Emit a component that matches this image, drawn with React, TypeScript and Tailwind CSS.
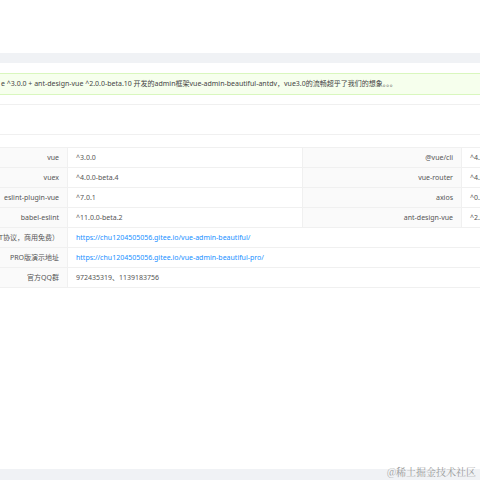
const font = { fontFamily: '"Noto Sans", "Noto Sans CJK SC", sans-serif' };

type Pair = { label: string; value: string };

const deps: [Pair, Pair][] = [
  [{ label: "vue", value: "^3.0.0" }, { label: "@vue/cli", value: "^4.5.6" }],
  [{ label: "vuex", value: "^4.0.0-beta.4" }, { label: "vue-router", value: "^4.0.0-beta.11" }],
  [{ label: "eslint-plugin-vue", value: "^7.0.1" }, { label: "axios", value: "^0.20.0" }],
  [{ label: "babel-eslint", value: "^11.0.0-beta.2" }, { label: "ant-design-vue", value: "^2.0.0-beta.10" }],
];

const wide: { label: string; value: string; link?: boolean }[] = [
  { label: "开源地址（MIT协议，商用免费）", value: "https://chu1204505056.gitee.io/vue-admin-beautiful/", link: true },
  { label: "PRO版演示地址", value: "https://chu1204505056.gitee.io/vue-admin-beautiful-pro/", link: true },
  { label: "官方QQ群", value: "972435319、1139183756" },
];

function Label({ text, border }: { text: string; border?: boolean }) {
  return (
    <div
      className={`flex h-[19px] items-center justify-end overflow-hidden whitespace-nowrap bg-[#fafafa] pr-2 pt-[2px] text-[#555] ${
        border ? "border-l border-[#f0f0f0]" : ""
      }`}
    >
      <span className="shrink-0">{text}</span>
    </div>
  );
}

function Value({ text, link }: { text: string; link?: boolean }) {
  return (
    <div
      className={`flex h-[19px] items-center overflow-hidden whitespace-nowrap border-l border-[#f0f0f0] pl-2 pt-[2px] ${
        link ? "text-[#1890ff]" : "text-[#555]"
      }`}
    >
      {text}
    </div>
  );
}

export default function App() {
  return (
    <div className="relative h-[480px] w-[480px] overflow-hidden bg-white text-[7px]" style={font}>
      <div className="h-[53px]" />
      <div className="h-[10px] bg-[#f0f2f5]" />
      <div className="pt-[10px]">
        <div className="flex h-[22px] items-center whitespace-nowrap border-y border-[#d9f7be] bg-[#f6ffed] pl-px text-[#444]">
          e ^3.0.0 + ant-design-vue ^2.0.0-beta.10 开发的admin框架vue-admin-beautiful-antdv，vue3.0的流畅超乎了我们的想象。。。
        </div>
        <div className="h-[10px] border-b border-[#f0f0f0]" />
        <div className="h-[30px] border-b border-[#f0f0f0]" />
        <div className="h-[12px]" />
        <div className="border-y border-[#f0f0f0]">
          {deps.map(([a, b]) => (
            <div key={a.label} className="grid grid-cols-[67px_235px_159px_1fr] border-b border-[#f0f0f0]">
              <Label text={a.label} />
              <Value text={a.value} />
              <Label text={b.label} border />
              <Value text={b.value} />
            </div>
          ))}
          {wide.map((r, i) => (
            <div
              key={r.label}
              className={`grid grid-cols-[67px_1fr] ${i < wide.length - 1 ? "border-b border-[#f0f0f0]" : ""}`}
            >
              <Label text={r.label} />
              <Value text={r.value} link={r.link} />
            </div>
          ))}
        </div>
      </div>
      <div className="absolute bottom-0 left-0 h-[11px] w-full bg-[#f0f2f5]" />
      <div
        className="absolute bottom-[3px] right-[4px] text-[10px] leading-none text-[#9a9a9a]"
        style={{ fontFamily: '"Noto Serif CJK SC", "Liberation Serif", "Noto Sans CJK SC", serif' }}
      >
        @稀土掘金技术社区
      </div>
    </div>
  );
}
